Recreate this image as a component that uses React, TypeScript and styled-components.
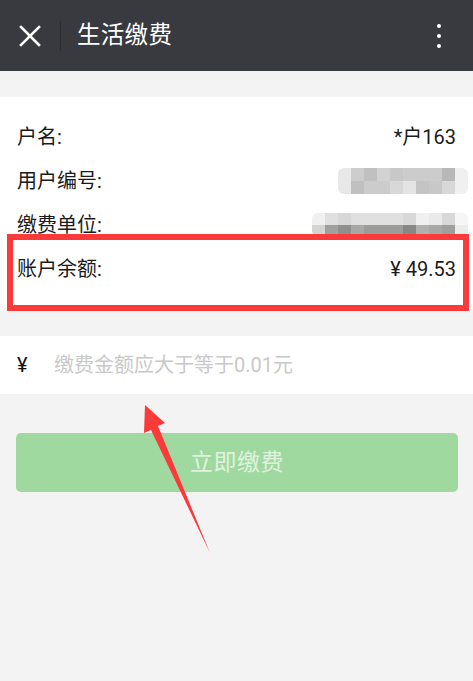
import React from "react";
import styled, { createGlobalStyle } from "styled-components";

const GlobalStyle = createGlobalStyle`
  html, body {
    margin: 0;
    padding: 0;
    background: #f3f3f3;
  }
  body {
    font-family: Roboto, "Noto Sans CJK SC", "Noto Sans", sans-serif;
    -webkit-font-smoothing: antialiased;
  }
`;

const Page = styled.div`
  position: relative;
  width: 473px;
  min-height: 681px;
  background: #f3f3f3;
  overflow: hidden;
`;

const Header = styled.header`
  display: flex;
  align-items: center;
  height: 71px;
  background: #393a3f;
  color: #ffffff;
`;

const CloseButton = styled.div`
  display: flex;
  align-items: center;
  justify-content: center;
  width: 60px;
  height: 100%;
`;

const Divider = styled.div`
  width: 1px;
  height: 30px;
  background: #2c2d31;
  margin-right: 16px;
`;

const Title = styled.h1`
  flex: 1;
  margin: 0;
  font-size: 23.5px;
  font-weight: 400;
  letter-spacing: 0.3px;
  line-height: 1;
`;

const MoreButton = styled.div`
  display: flex;
  flex-direction: column;
  align-items: center;
  gap: 6px;
  width: 20px;
  margin-right: 24px;

  span {
    width: 4px;
    height: 4px;
    border-radius: 50%;
    background: #ffffff;
  }
`;

const Card = styled.section`
  position: relative;
  margin-top: 26px;
  background: #ffffff;
  padding: 18px 17px 20px 17px;
`;

const InfoRow = styled.div`
  display: flex;
  align-items: center;
  justify-content: space-between;
  height: 44px;
  font-size: 20px;
  color: #1b1b1b;
`;

const Label = styled.span`
  line-height: 1;
`;

const Value = styled.span`
  line-height: 1;
`;

const Mosaic = styled.div<{ $cols: number; $shift: number; $row: number }>`
  display: grid;
  grid-template-columns: repeat(${(p) => p.$cols}, 13px);
  grid-auto-rows: ${(p) => p.$row}px;
  margin-right: ${(p) => p.$shift}px;
  filter: blur(0.6px);
  border-radius: 6px;
  overflow: hidden;
`;

const Cell = styled.div<{ $shade: number }>`
  background: ${(p) => `rgb(${p.$shade}, ${p.$shade}, ${p.$shade})`};
`;

const Highlight = styled.div`
  position: absolute;
  left: 7px;
  top: 137px;
  width: 450px;
  height: 65px;
  border: 6px solid #fb3a3a;
  pointer-events: none;
`;

const AmountBar = styled.div`
  display: flex;
  align-items: center;
  height: 58px;
  margin-top: 25px;
  padding: 0 17px;
  background: #ffffff;
`;

const Currency = styled.span`
  width: 37px;
  color: #111111;
  font-size: 20px;
  line-height: 1;
`;

const AmountInput = styled.input`
  flex: 1;
  border: none;
  outline: none;
  background: transparent;
  font-family: inherit;
  font-size: 20px;
  color: #333333;
  padding: 0;

  &::placeholder {
    color: #c9c9c9;
  }
`;

const PayButton = styled.button`
  display: block;
  width: 442px;
  height: 59px;
  margin: 39px 0 0 16px;
  padding: 0 0 6px 0;
  border: none;
  border-radius: 5px;
  background: #9fd99f;
  color: #dff2df;
  font-family: inherit;
  font-size: 23px;
  letter-spacing: 0.5px;
`;

const Annotation = styled.svg`
  position: absolute;
  left: 0;
  top: 0;
  pointer-events: none;
`;

const userNo = [
  [232, 205, 192, 210, 200, 204, 204, 204, 184, 240],
  [232, 192, 204, 204, 216, 228, 196, 200, 216, 240],
];

const payee = [
  [240, 224, 216, 224, 224, 224, 224, 216, 240, 234, 216, 246],
  [212, 160, 144, 168, 156, 156, 156, 136, 176, 168, 160, 236],
];

const MosaicBlock: React.FC<{ data: number[][]; shift: number; row: number }> = ({
  data,
  shift,
  row,
}) => (
  <Mosaic $cols={data[0].length} $shift={shift} $row={row}>
    {data.flat().map((shade, i) => (
      <Cell key={i} $shade={shade} />
    ))}
  </Mosaic>
);

const App: React.FC = () => {
  return (
    <Page>
      <GlobalStyle />
      <Header>
        <CloseButton>
          <svg width="22" height="22" viewBox="0 0 22 22">
            <path
              d="M2 2 L20 20 M20 2 L2 20"
              stroke="#ffffff"
              strokeWidth="2.6"
              strokeLinecap="square"
            />
          </svg>
        </CloseButton>
        <Divider />
        <Title>生活缴费</Title>
        <MoreButton>
          <span />
          <span />
          <span />
        </MoreButton>
      </Header>

      <Card>
        <InfoRow>
          <Label>户名:</Label>
          <Value>*户163</Value>
        </InfoRow>
        <InfoRow>
          <Label>用户编号:</Label>
          <MosaicBlock data={userNo} shift={-12} row={13} />
        </InfoRow>
        <InfoRow>
          <Label>缴费单位:</Label>
          <MosaicBlock data={payee} shift={-12} row={12} />
        </InfoRow>
        <InfoRow>
          <Label>账户余额:</Label>
          <Value>¥ 49.53</Value>
        </InfoRow>
        <Highlight />
      </Card>

      <AmountBar>
        <Currency>¥</Currency>
        <AmountInput placeholder="缴费金额应大于等于0.01元" />
      </AmountBar>

      <PayButton>立即缴费</PayButton>

      <Annotation width="473" height="681" viewBox="0 0 473 681">
        <polygon
          points="145,405 165,423 158,426 210,553 151,430 144,433"
          fill="#fb3a3a"
        />
      </Annotation>
    </Page>
  );
};

export default App;
